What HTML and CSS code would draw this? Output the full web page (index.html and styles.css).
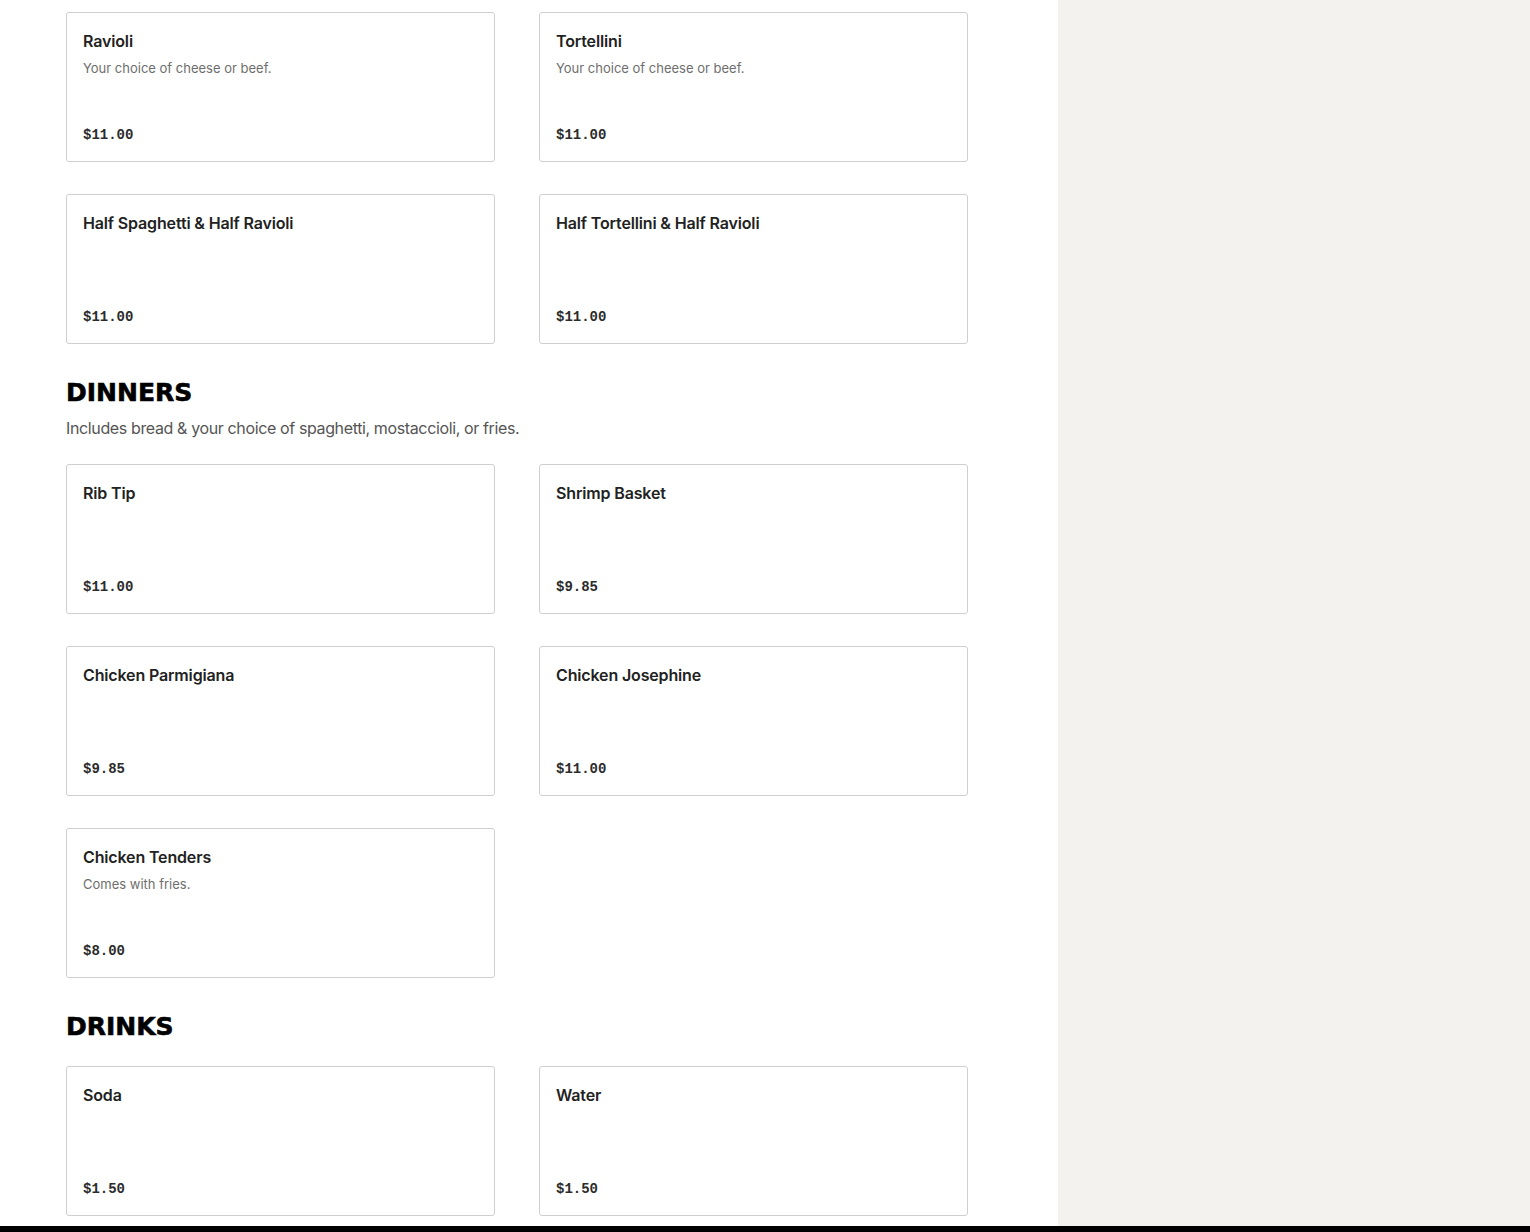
FILE: index.html
```html
<!DOCTYPE html>
<html>
<head>
<meta charset="utf-8">
<link rel="stylesheet" href="styles.css">
</head>
<body>
<div class="page">
  <main class="menu">
    <section class="section">
      <div class="grid">
        <div class="card"><div class="name">Ravioli</div><div class="desc">Your choice of cheese or beef.</div><div class="price">$11.00</div></div>
        <div class="card"><div class="name">Tortellini</div><div class="desc">Your choice of cheese or beef.</div><div class="price">$11.00</div></div>
        <div class="card"><div class="name">Half Spaghetti &amp; Half Ravioli</div><div class="price">$11.00</div></div>
        <div class="card"><div class="name">Half Tortellini &amp; Half Ravioli</div><div class="price">$11.00</div></div>
      </div>
    </section>
    <section class="section">
      <h2 class="heading">DINNERS</h2>
      <p class="sub">Includes bread &amp; your choice of spaghetti, mostaccioli, or fries.</p>
      <div class="grid">
        <div class="card"><div class="name">Rib Tip</div><div class="price">$11.00</div></div>
        <div class="card"><div class="name">Shrimp Basket</div><div class="price">$9.85</div></div>
        <div class="card"><div class="name">Chicken Parmigiana</div><div class="price">$9.85</div></div>
        <div class="card"><div class="name">Chicken Josephine</div><div class="price">$11.00</div></div>
        <div class="card"><div class="name">Chicken Tenders</div><div class="desc">Comes with fries.</div><div class="price">$8.00</div></div>
      </div>
    </section>
    <section class="section">
      <h2 class="heading">DRINKS</h2>
      <div class="grid">
        <div class="card"><div class="name">Soda</div><div class="price">$1.50</div></div>
        <div class="card"><div class="name">Water</div><div class="price">$1.50</div></div>
      </div>
    </section>
  </main>
  <aside class="side"></aside>
</div>
<div class="bottombar"></div>
</body>
</html>
```
FILE: styles.css
```css
html, body {
  margin: 0;
  padding: 0;
  background: #ffffff;
}
body {
  font-family: Inter, "Noto Sans", sans-serif;
  color: #222;
}
.page {
  display: flex;
  min-height: 100vh;
}
.menu {
  width: 1058px;
  box-sizing: border-box;
  padding: 12px 0 0 66px;
  flex-shrink: 0;
}
.side {
  flex: 1;
  background: #f3f2ef;
}
.section {
  width: 902px;
  margin-bottom: 32px;
}
.grid {
  display: grid;
  grid-template-columns: 429px 429px;
  column-gap: 44px;
  row-gap: 32px;
}
.card {
  box-sizing: border-box;
  height: 150px;
  border: 1px solid #cfcfcf;
  border-radius: 3px;
  padding: 16px 16px 15px 16px;
  display: flex;
  flex-direction: column;
}
.name {
  font-size: 16px;
  line-height: 24px;
  font-weight: 600;
  letter-spacing: -0.15px;
  color: #222;
}
.desc {
  margin-top: 5px;
  font-size: 13px;
  line-height: 20px;
  color: #6e6e6e;
}
.price {
  margin-top: auto;
  font-family: "Liberation Mono", "DejaVu Sans Mono", monospace;
  font-weight: 700;
  font-size: 14px;
  line-height: 22px;
  color: #2b2b2b;
}
.heading {
  margin: 0;
  padding-top: 2px;
  font-family: "DejaVu Sans", sans-serif;
  font-weight: 900;
  font-size: 25px;
  line-height: 30px;
  color: #000;
  -webkit-text-stroke: 0.6px #000;
}
.sub {
  margin: 8px 0 24px 0;
  font-size: 16px;
  line-height: 24px;
  letter-spacing: -0.37px;
  color: #555;
}
.section .heading + .grid {
  margin-top: 24px;
}
.bottombar {
  position: fixed;
  left: 0;
  right: 0;
  bottom: 0;
  height: 6px;
  background: #000;
}
```
